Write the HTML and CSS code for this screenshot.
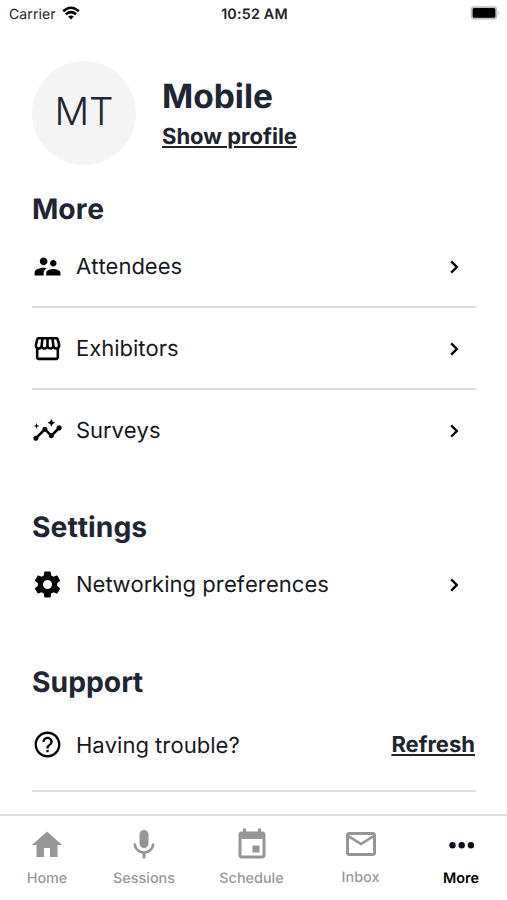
FILE: index.html
```
<!DOCTYPE html>
<html lang="en">
<head>
<meta charset="utf-8">
<title>More</title>
<link rel="stylesheet" href="styles.css">
</head>
<body>
<div class="screen">
  <header class="status">
    <div class="carrier"><span>Carrier</span>
      <svg class="wifi" viewBox="0 0 18 14"><path d="M9 13.600 6.100 10.600Q9 8.300 11.900 10.600Z"/><path class="arc" d="M3.900 8.300Q9 4 14.100 8.300M1.200 5.200Q9-1.700 16.800 5.200"/></svg>
    </div>
    <div class="clock">10:52 AM</div>
    <svg class="battery" viewBox="0 0 30 16"><rect x=".7" y="1.2" width="26.600" height="13.400" rx="3.500" fill="#bdbdbd"/><rect x="2.700" y="3" width="22.600" height="9.800" rx="1.600"/><path d="M28.300 5.900q2.400 2 0 4z" fill="#bdbdbd"/></svg>
  </header>

  <main class="content">
    <section class="profile">
      <div class="avatar">MT</div>
      <div class="who">
        <h1>Mobile</h1>
        <a class="link">Show profile</a>
      </div>
    </section>

    <section class="group">
      <h2>More</h2>
      <div class="row">
        <svg class="icon" viewBox="0 0 24 24"><path d="M16.500 12c1.380 0 2.490-1.120 2.490-2.500S17.880 7 16.500 7 14 8.120 14 9.500s1.120 2.500 2.500 2.500zM9 11c1.660 0 2.990-1.340 2.990-3S10.660 5 9 5 6 6.340 6 8s1.340 3 3 3zm7.500 3c-1.830 0-5.500.92-5.500 2.750V19h11v-2.250c0-1.830-3.670-2.750-5.500-2.750zM9 13c-2.330 0-7 1.170-7 3.500V19h7v-2.250c0-.85.33-2.340 2.370-3.470C10.500 13.100 9.660 13 9 13z"/></svg>
        <span class="label">Attendees</span>
        <svg class="chev" viewBox="0 0 24 24"><path d="M9.400 6.800 14.600 12l-5.200 5.200"/></svg>
      </div>
      <div class="row">
        <svg class="icon" viewBox="0 0 24 24"><path d="M21.900 8.890l-1.050-4.370c-.22-.9-1-1.520-1.910-1.520H5.050c-.9 0-1.690.63-1.900 1.520L2.100 8.890c-.24 1.020-.02 2.060.62 2.880.08.11.19.19.28.29V19c0 1.100.9 2 2 2h14c1.100 0 2-.9 2-2v-6.940c.09-.09.2-.18.28-.28.64-.82.87-1.870.62-2.890zm-2.990-3.900l1.050 4.370c.1.42.01.84-.25 1.170-.14.18-.44.47-.94.47-.61 0-1.140-.49-1.210-1.140L16.980 5l1.930-.01zM13 5h1.960l.54 4.520c.05.39-.07.78-.33 1.070-.22.26-.54.41-.95.41-.67 0-1.220-.59-1.220-1.310V5zM8.490 9.520L9.040 5H11v4.690c0 .72-.55 1.310-1.290 1.310-.34 0-.65-.15-.89-.41-.25-.29-.37-.68-.33-1.070zm-4.450-.16L5.050 5h1.970l-.58 4.860c-.08.65-.6 1.140-1.210 1.140-.49 0-.8-.29-.93-.47-.27-.32-.36-.75-.26-1.170zM5 19v-6.030c.08.01.15.03.23.03.87 0 1.660-.36 2.240-.95.6.6 1.400.95 2.310.95.87 0 1.650-.36 2.230-.93.59.57 1.390.93 2.290.93.84 0 1.640-.35 2.240-.95.58.59 1.370.95 2.240.95.08 0 .15-.02.23-.03V19H5z"/></svg>
        <span class="label">Exhibitors</span>
        <svg class="chev" viewBox="0 0 24 24"><path d="M9.400 6.800 14.600 12l-5.200 5.200"/></svg>
      </div>
      <div class="row last">
        <svg class="icon" viewBox="0 0 24 24"><path d="M21 8c-1.450 0-2.260 1.440-1.930 2.510l-3.550 3.560c-.3-.09-.74-.09-1.040 0l-2.550-2.550C12.270 10.450 11.460 9 10 9c-1.450 0-2.270 1.440-1.930 2.520l-4.560 4.550C2.440 15.740 1 16.550 1 18c0 1.100.9 2 2 2 1.450 0 2.260-1.440 1.930-2.510l4.550-4.560c.3.09.74.09 1.040 0l2.550 2.550C12.730 16.550 13.540 18 15 18c1.450 0 2.270-1.440 1.930-2.520l3.560-3.550C21.560 12.260 23 11.450 23 10c0-1.100-.9-2-2-2z"/><path d="M15 9l.94-2.070L18 6l-2.060-.93L15 3l-.92 2.070L12 6l2.080.93zM3.500 11L4 9l2-.5L4 8l-.5-2L3 8l-2 .5L3 9z"/></svg>
        <span class="label">Surveys</span>
        <svg class="chev" viewBox="0 0 24 24"><path d="M9.400 6.800 14.600 12l-5.200 5.200"/></svg>
      </div>
    </section>

    <section class="group settings">
      <h2>Settings</h2>
      <div class="row last">
        <svg class="icon" viewBox="0 0 24 24"><path d="M12 15.500A3.500 3.500 0 0 1 8.500 12 3.500 3.500 0 0 1 12 8.500a3.500 3.500 0 0 1 3.500 3.500 3.500 3.500 0 0 1-3.500 3.500m7.430-2.530c.04-.32.07-.64.07-.97s-.03-.66-.07-1l2.110-1.630c.19-.15.24-.42.12-.64l-2-3.460c-.12-.22-.39-.31-.61-.22l-2.490 1c-.52-.39-1.060-.73-1.690-.98l-.37-2.650A.506.506 0 0 0 14 2h-4c-.25 0-.46.18-.5.42l-.37 2.650c-.63.25-1.170.59-1.690.98l-2.490-1c-.22-.09-.49 0-.61.22l-2 3.460c-.13.22-.07.49.12.64L4.570 11c-.04.34-.07.67-.07 1s.03.65.07.97l-2.110 1.660c-.19.15-.25.42-.12.64l2 3.460c.12.22.39.3.61.22l2.490-1.010c.52.4 1.060.74 1.690.99l.37 2.650c.04.24.25.42.5.42h4c.25 0 .46-.18.5-.42l.37-2.650c.63-.26 1.170-.59 1.690-.99l2.490 1.010c.22.08.49 0 .61-.22l2-3.460c.12-.22.07-.49-.12-.64l-2.110-1.660z"/></svg>
        <span class="label">Networking preferences</span>
        <svg class="chev" viewBox="0 0 24 24"><path d="M9.400 6.800 14.600 12l-5.200 5.200"/></svg>
      </div>
    </section>

    <section class="group support">
      <h2>Support</h2>
      <div class="row">
        <svg class="icon" viewBox="0 0 24 24"><path d="M11.100 18h1.800v-1.800h-1.800V18zM12 2C6.480 2 2 6.480 2 12s4.480 10 10 10 10-4.480 10-10S17.520 2 12 2zm0 18.200c-4.520 0-8.200-3.680-8.200-8.200S7.480 3.800 12 3.800s8.200 3.680 8.200 8.200-3.680 8.200-8.200 8.200zM12 6c-2.210 0-4 1.790-4 4h1.800c0-1.200 1-2.200 2.200-2.200s2.200 1 2.200 2.200c0 2-3.100 1.750-3.100 5h1.800c0-2.250 3.100-2.500 3.100-5 0-2.210-1.790-4-4-4z"/></svg>
        <span class="label">Having trouble?</span>
        <a class="link">Refresh</a>
      </div>
    </section>
  </main>

  <nav class="tabs">
    <div class="tab"><svg viewBox="0 0 24 24"><path d="M10 20v-6h4v6h5v-8h3L12 3 2 12h3v8z"/></svg><span>Home</span></div>
    <div class="tab"><svg viewBox="0 0 24 24"><path d="M12 14c1.660 0 2.990-1.340 2.990-3L15 5c0-1.660-1.340-3-3-3S9 3.340 9 5v6c0 1.660 1.340 3 3 3zm5.300-3c0 3-2.540 5.100-5.300 5.100S6.700 14 6.700 11H5c0 3.410 2.720 6.230 6 6.720V21h2v-3.280c3.280-.48 6-3.300 6-6.720h-1.700z"/></svg><span>Sessions</span></div>
    <div class="tab"><svg viewBox="0 0 24 24"><path d="M17 12.300h-4.700V17H17zM16 1v2H8V1H6v2H5c-1.110 0-1.990.9-1.990 2L3 19c0 1.100.89 2 2 2h14c1.100 0 2-.9 2-2V5c0-1.100-.9-2-2-2h-1V1h-2zm3 18H5V8h14v11z"/></svg><span>Schedule</span></div>
    <div class="tab inbox"><svg viewBox="0 0 24 24"><path d="M22 6c0-1.100-.9-2-2-2H4c-1.100 0-2 .9-2 2v12c0 1.100.9 2 2 2h16c1.100 0 2-.9 2-2V6zm-2 0l-8 5-8-5h16zm0 12H4V8l8 5 8-5v10z"/></svg><span>Inbox</span></div>
    <div class="tab active"><svg viewBox="0 0 36 36"><circle cx="9.500" cy="18.300" r="3.200"/><circle cx="18.700" cy="18.300" r="3.200"/><circle cx="27.900" cy="18.300" r="3.200"/></svg><span>More</span></div>
  </nav>
</div>
</body>
</html>
```

FILE: styles.css
```
* { box-sizing: border-box; }
body { margin: 0; background: #fff; font-family: Inter, "Liberation Sans", sans-serif; color: #17181c; text-rendering: geometricPrecision; }
svg { display: block; flex: none; }
h1, h2 { margin: 0; color: #1f2633; font-weight: 700; }
.screen { width: 507px; height: 900px; display: flex; flex-direction: column; overflow: hidden; background: #fff; }

.status { height: 26px; flex: none; display: grid; grid-template-columns: 1fr auto 1fr; align-items: center; padding: 0 7px 0 9px; font-size: 14px; color: #222; }
.status span, .clock { padding-top: 2px; }
.carrier { display: flex; align-items: center; gap: 6px; letter-spacing: .1px; }
.wifi { width: 18px; height: 14px; }
.wifi .arc { fill: none; stroke: #000; stroke-width: 2.500; }
.clock { font-size: 14.300px; font-weight: 600; letter-spacing: .2px; }
.battery { width: 30px; height: 16px; justify-self: end; }

.content { flex: 1; min-height: 0; padding: 35px 31px 0 32px; overflow: hidden; }
.profile { display: flex; align-items: center; gap: 26px; height: 104px; }
.avatar { width: 104px; height: 104px; border-radius: 50%; background: #f4f4f5; display: flex; align-items: center; justify-content: center; font-size: 38.500px; font-weight: 350; line-height: 46px; padding-bottom: 2px; color: #1f2633; }
.who { display: flex; flex-direction: column; align-items: flex-start; gap: 5px; padding-top: 3px; }
h1 { font-size: 33.500px; line-height: 40px; }
.link { font-size: 22px; line-height: 30px; font-weight: 650; color: #20242c; text-decoration: underline; text-decoration-thickness: 2px; text-underline-offset: 2px; }

.group { padding-top: 26px; }
.group + .group { padding-top: 39px; }
h2 { font-size: 28.300px; line-height: 36px; font-kerning: none; }
.row { height: 82px; margin-top: -1px; display: flex; align-items: center; border-bottom: 2px solid #dededf; }
.row + .row { margin-top: 0; }
.row.last { height: 80px; border-bottom: 0; }
.icon { width: 31px; height: 31px; margin: 0 13px 0 0; }
.label { flex: 1; font-size: 22px; padding-top: 2px; font-kerning: none; }
.chev { width: 26px; height: 26px; margin: 1px 9px 0 0; fill: none; stroke: #000; stroke-width: 2.200; }
.group.support { padding-top: 40px; }
.support .row { height: 93px; }
.support .link { margin: 1px 1px 0 0; }

.tabs { height: 86px; flex: none; border-top: 2px solid #dededf; display: grid; grid-template-columns: 94px 100px 115px 103px 95px; padding-top: 11px; color: #999; fill: #969696; }
.tab { display: flex; flex-direction: column; align-items: center; gap: 7px; font-size: 14.400px; line-height: 18px; font-weight: 500; }
.tab svg { width: 36px; height: 36px; }
.inbox svg { margin-top: -1px; }
.active { color: #000; fill: #080820; padding-left: 3px; font-weight: 600; }
```
